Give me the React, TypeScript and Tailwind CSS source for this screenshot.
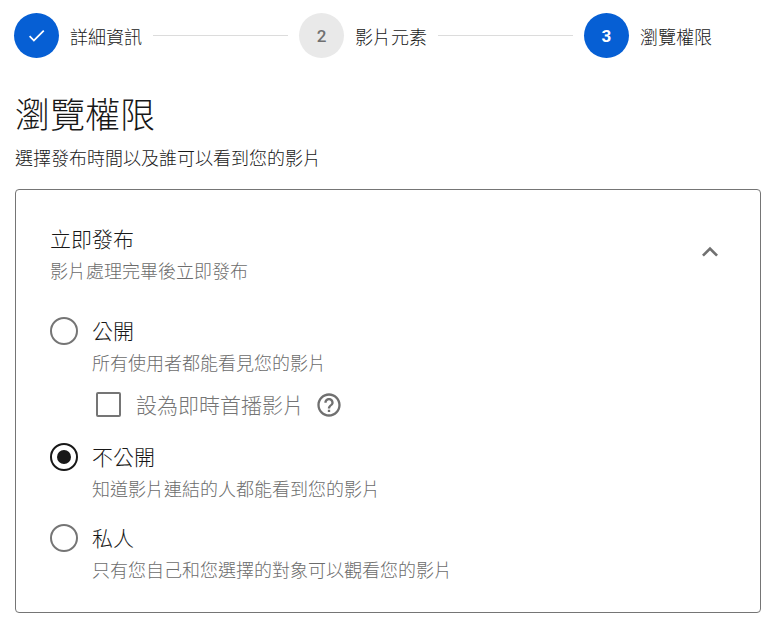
import { useState } from "react";

const steps = [
  { n: 1, label: "詳細資訊", state: "done" },
  { n: 2, label: "影片元素", state: "todo" },
  { n: 3, label: "瀏覽權限", state: "current" },
];

const options = [
  { id: "public", label: "公開", hint: "所有使用者都能看見您的影片" },
  { id: "unlisted", label: "不公開", hint: "知道影片連結的人都能看到您的影片" },
  { id: "private", label: "私人", hint: "只有您自己和您選擇的對象可以觀看您的影片" },
];

function Stepper() {
  return (
    <ol className="flex items-center gap-[11px] pl-3.5 pr-[65px]">
      {steps.map((s, i) => (
        <li
          key={s.n}
          className={`flex items-center gap-[11px] ${i < steps.length - 1 ? "flex-1" : ""}`}
        >
          <span
            className={`flex size-[45px] shrink-0 items-center justify-center rounded-full pt-0.5 font-[Roboto,sans-serif] text-[17px] ${
              s.state === "todo"
                ? "bg-[#e9e9e9] font-medium text-[#707070]"
                : "bg-[#065fd4] font-bold text-white"
            }`}
          >
            {s.state === "done" ? (
              <svg className="mb-0.5 size-[21px]" viewBox="0 0 24 24" fill="currentColor" aria-hidden="true">
                <path d="M9 16.17 4.83 12l-1.42 1.41L9 19 21 7l-1.41-1.41z" />
              </svg>
            ) : (
              s.n
            )}
          </span>
          <span className="whitespace-nowrap text-lg text-[#181818]">{s.label}</span>
          {i < steps.length - 1 && <span className="h-px flex-1 bg-[#dcdcdc]" />}
        </li>
      ))}
    </ol>
  );
}

export default function App() {
  const [open, setOpen] = useState(true);
  const [visibility, setVisibility] = useState("unlisted");
  const [premiere, setPremiere] = useState(false);

  return (
    <main className="bg-white pt-[13px] pb-2 font-['Noto_Sans_CJK_TC',sans-serif] font-light text-[#181818]">
      <Stepper />

      <div className="pl-[15px] pr-4">
        <h1 className="mt-[31px] text-[35px] leading-12 font-light">瀏覽權限</h1>
        <p className="mt-1.5 text-lg leading-7">選擇發布時間以及誰可以看到您的影片</p>

        <section className="mt-[18px] rounded border border-[#757575] px-[34px] pt-8 pb-[27px]">
          <div className="flex items-center justify-between">
            <div>
              <h2 className="text-[21px] leading-8 font-light">立即發布</h2>
              <p className="text-lg leading-8 text-[#6c6c6c]">影片處理完畢後立即發布</p>
            </div>
            <button
              type="button"
              aria-label="立即發布"
              aria-expanded={open}
              onClick={() => setOpen(!open)}
              className="mb-1 text-[#707070]"
            >
              <svg
                className={`size-8 ${open ? "" : "rotate-180"}`}
                viewBox="0 0 24 24"
                fill="currentColor"
                aria-hidden="true"
              >
                <path d="M12 8l-6 6 1.41 1.41L12 10.83l4.59 4.58L18 14z" />
              </svg>
            </button>
          </div>

          {open && (
            <div className="mt-7 flex flex-col gap-[17px]">
              {options.map((o) => (
                <div key={o.id}>
                  <div className="flex gap-3.5">
                    <input
                      type="radio"
                      name="visibility"
                      id={o.id}
                      checked={visibility === o.id}
                      onChange={() => setVisibility(o.id)}
                      className="mt-[3px] size-7 shrink-0 appearance-none rounded-full border-2 border-[#757575] bg-clip-content p-[5px] checked:border-[#181818] checked:bg-[#181818]"
                    />
                    <label htmlFor={o.id} className="block">
                      <span className="block text-[21px] leading-8">{o.label}</span>
                      <span className="block text-lg leading-8 text-[#6c6c6c]">{o.hint}</span>
                    </label>
                  </div>
                  {o.id === "public" && (
                    <div className="mt-2 flex h-[37px] items-center pl-[46px] text-[#757575]">
                      <input
                        type="checkbox"
                        id="premiere"
                        checked={premiere}
                        onChange={(e) => setPremiere(e.target.checked)}
                        className="size-[25px] shrink-0 appearance-none rounded-xs border-2 border-[#757575] checked:bg-[#757575]"
                      />
                      <label htmlFor="premiere" className="ml-[15px] pb-0.5 text-[21px] leading-8">
                        設為即時首播影片
                      </label>
                      <button type="button" aria-label="說明" className="ml-[11px] text-[#707070]">
                        <svg className="size-7" viewBox="0 0 24 24" fill="currentColor" aria-hidden="true">
                          <path d="M11 18h2v-2h-2v2zm1-16C6.48 2 2 6.48 2 12s4.48 10 10 10 10-4.48 10-10S17.52 2 12 2zm0 18c-4.41 0-8-3.59-8-8s3.59-8 8-8 8 3.59 8 8-3.59 8-8 8zm0-14c-2.21 0-4 1.79-4 4h2c0-1.1.9-2 2-2s2 .9 2 2c0 2-3 1.75-3 5h2c0-2.25 3-2.5 3-5 0-2.21-1.79-4-4-4z" />
                        </svg>
                      </button>
                    </div>
                  )}
                </div>
              ))}
            </div>
          )}
        </section>
      </div>
    </main>
  );
}
